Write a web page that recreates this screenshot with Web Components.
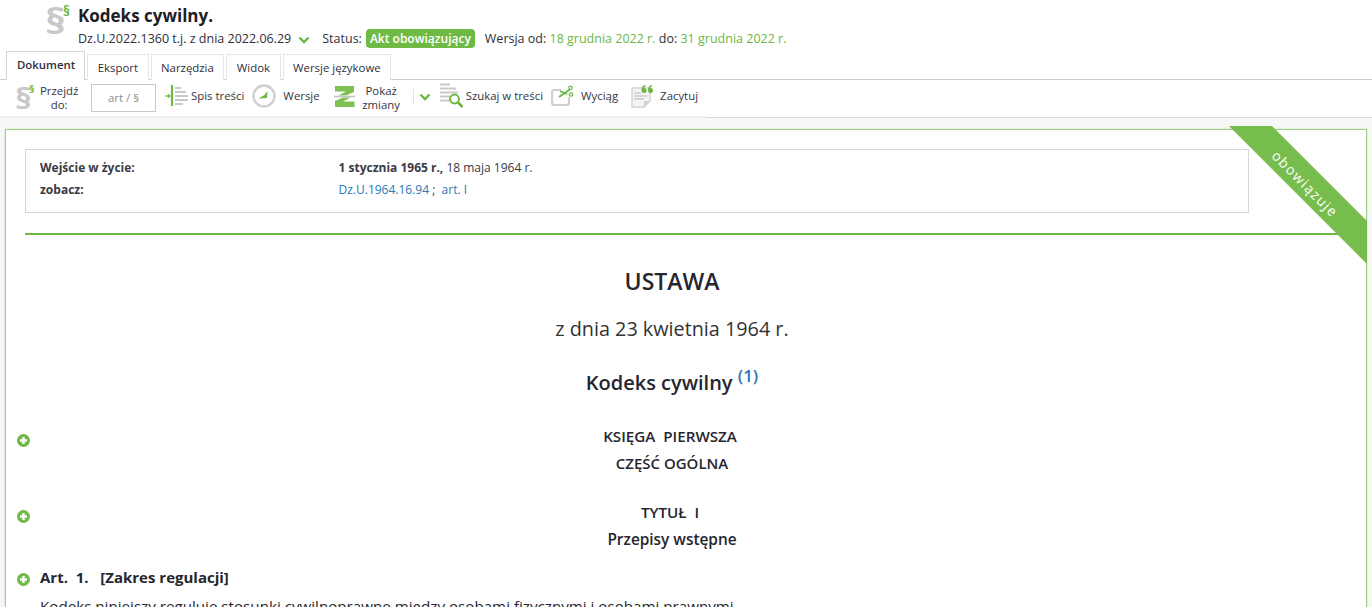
<!DOCTYPE html>
<html lang="pl">
<head>
<meta charset="utf-8">
<title>Kodeks cywilny</title>
<style>
  html, body { margin: 0; height: 607px; overflow: hidden; background: #f7f7f7; }
  body { font-family: "Open Sans", "Liberation Sans", sans-serif; color: #333; }
</style>
</head>
<body>
<kc-header>
  <span slot="title">Kodeks cywilny.</span>
  <kc-tab active>Dokument</kc-tab>
  <kc-tab>Eksport</kc-tab>
  <kc-tab>Narzędzia</kc-tab>
  <kc-tab>Widok</kc-tab>
  <kc-tab>Wersje językowe</kc-tab>
  <kc-toolbar slot="toolbar"></kc-toolbar>
</kc-header>
<kc-card>
  <kc-meta></kc-meta>
  <kc-heading size="23" weight="600" top="29" line="34">USTAWA</kc-heading>
  <kc-heading size="19.8" weight="400" top="17" line="28" color="#333">z dnia 23 kwietnia 1964 r.</kc-heading>
  <kc-heading size="20" weight="600" top="25" line="30">Kodeks cywilny <sup>(1)</sup></kc-heading>
  <kc-heading size="15.2" weight="600" top="25" line="27" plus>KSIĘGA&nbsp; PIERWSZA&nbsp;</kc-heading>
  <kc-heading size="15" weight="600" top="0" line="27">CZĘŚĆ OGÓLNA</kc-heading>
  <kc-heading size="15.2" weight="600" top="22" line="27" plus>TYTUŁ&nbsp; I&nbsp;</kc-heading>
  <kc-heading size="15.4" weight="600" top="0" line="27">Przepisy wstępne</kc-heading>
  <kc-article title-text="Art.&nbsp; 1.&nbsp;&nbsp; [Zakres regulacji]">Kodeks niniejszy reguluje stosunki cywilnoprawne między osobami fizycznymi i osobami prawnymi.</kc-article>
  <kc-ribbon>obowiązuje</kc-ribbon>
</kc-card>

<script>
const CHEVRON = `<svg width="12" height="8" viewBox="0 0 12 8"><path d="M1.5 1.5 6 6l4.5-4.5" fill="none" stroke="#6cb744" stroke-width="2.4"/></svg>`;

class KcHeader extends HTMLElement {
  constructor() {
    super();
    this.attachShadow({mode: 'open'}).innerHTML = `
    <style>
      :host { display: block; background: #fff; height: 118px; box-sizing: border-box; font-size: 12.5px; color: #2f2f3a; }
      .top { display: flex; height: 51px; }
      .logo { width: 78px; position: relative; flex: none; }
      .logo b { position: absolute; left: 45px; top: 0; font-size: 36px; line-height: 42px; color: #c9c9c9; font-weight: 700; transform: scaleX(1.18); transform-origin: left; }
      .logo i { position: absolute; left: 63px; top: 3px; font-size: 14px; line-height: 16px; color: #6cb744; font-style: normal; font-weight: 700; }
      h1 { margin: 0; padding-top: 5px; font-size: 17px; line-height: 21px; font-weight: 700; color: #1d1d26; }
      .sub { display: flex; align-items: center; height: 19px; margin-top: 3px; white-space: nowrap; }
      .sub svg { margin: 2px 0 0 7px; }
      .status { margin-left: 12px; }
      .badge { margin-left: 4px; background: #6fba45; color: #fff; border-radius: 4px; font-size: 12px; font-weight: 600; padding: 0 4px; line-height: 19px; height: 19px; }
      .ver { margin-left: 10px; }
      .g { color: #6cb744; }
      .tabs { display: flex; box-sizing: border-box; height: 29px; padding-left: 6px; gap: 2px; align-items: flex-end; border-bottom: 1px solid #cfcfcf; }
    </style>
    <div class="top">
      <div class="logo"><b>§</b><i>§</i></div>
      <div>
        <h1><slot name="title"></slot></h1>
        <div class="sub">
          <span>Dz.U.2022.1360 t.j. z dnia 2022.06.29</span>${CHEVRON}
          <span class="status">Status:</span><span class="badge">Akt obowiązujący</span>
          <span class="ver">Wersja od: <span class="g">18 grudnia 2022 r.</span> do: <span class="g">31 grudnia 2022 r.</span></span>
        </div>
      </div>
    </div>
    <div class="tabs"><slot></slot></div>
    <slot name="toolbar"></slot>`;
  }
}

class KcTab extends HTMLElement {
  constructor() {
    super();
    this.attachShadow({mode: 'open'}).innerHTML = `
    <style>
      :host { display: block; box-sizing: border-box; height: 26px; margin-bottom: -1px; padding: 0 9.5px; border: 1px solid #e6e6e6; border-bottom: 0; font-size: 11.4px; line-height: 25px; color: #2f2f3a; background: #fff; white-space: nowrap; }
      :host([active]) { height: 29px; border-color: #d4d4d4; font-weight: 600; line-height: 26px; padding: 0 9px 0 10px; position: relative; }
    </style><slot></slot>`;
  }
}

class KcTool extends HTMLElement {
  constructor() {
    super();
    this.attachShadow({mode: 'open'}).innerHTML = `
    <style>
      :host { display: flex; align-items: center; flex: none; font-size: 11.4px; line-height: 14px; color: #35353f; text-align: center; white-space: nowrap; }
      ::slotted(svg) { display: block; flex: none; }
    </style><slot></slot>`;
  }
}
customElements.define('kc-tool', KcTool);

class KcToolbar extends HTMLElement {
  constructor() {
    super();
    this.attachShadow({mode: 'open'}).innerHTML = `
    <style>
      :host { display: flex; align-items: center; box-sizing: border-box; width: 706px; height: 38px; padding: 0 0 4px 16px; background: #fff; border-bottom: 2px solid #ececec; position: relative; }
      :host::after { content: ""; position: absolute; left: 706px; width: 666px; bottom: -2px; height: 1px; background: #d8d8d8; }
      .para { width: 24px; position: relative; height: 30px; flex: none; }
      .para b { position: absolute; left: -1px; top: 1px; font-size: 29px; line-height: 32px; color: #c9c9c9; transform: scaleX(1.18); transform-origin: left; }
      .para i { position: absolute; left: 13px; top: 2px; font-size: 11px; line-height: 12px; color: #6cb744; font-style: normal; font-weight: 700; }
      .input { box-sizing: border-box; width: 65px; height: 28px; margin: 3px 0 0 12px; border: 1px solid #c9c9c9; color: #8d8d8d; font-size: 11.4px; line-height: 26px; text-align: center; flex: none; }
      .sep { width: 1px; height: 16px; margin: 2px 0 0 12px; background: #e2e2e2; flex: none; }
      .chev { margin: 2px 0 0 5px; flex: none; display: block; }
      .two { margin-top: 4px; }
    </style>
    <div class="para"><b>§</b><i>§</i></div>
    <kc-tool class="two" style="width:39px">Przejdź<br>do:</kc-tool>
    <div class="input">art / §</div>
    <kc-tool style="margin-left:9px">
      <svg width="24" height="22" viewBox="0 0 24 22"><path d="M0 11h4" stroke="#6cb744" stroke-width="1.3"/><path d="M3 8.800 6 11l-3 2.200z" fill="#6cb744"/><path d="M7 0v21" stroke="#6cb744" stroke-width="2.200"/><path d="M10 3h6M10 7h11M10 11h13M10 15h13M10 19h8" stroke="#c9c9c9" stroke-width="2.200"/></svg>
      <span style="margin-left:2px">Spis treści</span>
    </kc-tool>
    <kc-tool style="margin-left:8px">
      <svg width="24" height="24" viewBox="0 0 24 24"><circle cx="12" cy="12" r="10.500" fill="#fff" stroke="#cfcfcf" stroke-width="2.400"/><path d="M6.500 14.500 12.500 11 15.500 7 15 14z" fill="#6cb744"/></svg>
      <span style="margin-left:7px">Wersje</span>
    </kc-tool>
    <kc-tool style="margin-left:14px">
      <svg width="21" height="21" viewBox="0 0 21 21"><path d="M1 0h19v6L12 9.500H4.500L12 5.500H1zM1 21v-6l8-3.500h7.500L9 15.500h11.500V21z" fill="#7cc152"/><path d="M0 10.500h21" stroke="#c4c4c4" stroke-width="1.600"/></svg>
      <span class="two" style="margin-left:7px;width:39px">Pokaż<br>zmiany</span>
    </kc-tool>
    <div class="sep"></div>
    ${CHEVRON.replace('<svg', '<svg class="chev"')}
    <kc-tool style="margin-left:9px">
      <svg width="24" height="26" viewBox="0 0 24 26"><path d="M0 1.500h10M0 5.500h16M0 9.500h18M0 13.500h18M0 17.500h10" stroke="#c9c9c9" stroke-width="2.200"/><circle cx="14.500" cy="16" r="4.400" fill="#fff" stroke="#6cb744" stroke-width="2"/><path d="M18 19.500l4.500 4.500" stroke="#6cb744" stroke-width="2.600"/></svg>
      <span style="margin-left:2px">Szukaj w treści</span>
    </kc-tool>
    <kc-tool style="margin-left:8px">
      <svg width="24" height="22" viewBox="0 0 24 22"><path d="M10 5H3Q1 5 1 7v11q0 2 2 2h13q2 0 2-2v-6" fill="none" stroke="#cfcfcf" stroke-width="2.200"/><path d="M8 12 19 4.500M9 6l7 3" stroke="#6cb744" stroke-width="1.800" fill="none"/><circle cx="19.500" cy="2.800" r="1.700" fill="none" stroke="#6cb744" stroke-width="1.200"/><circle cx="20" cy="9.500" r="1.700" fill="none" stroke="#6cb744" stroke-width="1.200"/></svg>
      <span style="margin-left:6px">Wyciąg</span>
    </kc-tool>
    <kc-tool style="margin-left:13px">
      <svg width="23" height="24" viewBox="0 0 23 24"><path d="M1 4H19V17L13 23H1z" fill="#f4f4f4" stroke="#d2d2d2" stroke-width="1.400"/><path d="M3 9h7M3 12h13M3 15h10" stroke="#cbcbcb" stroke-width="1.300"/><path d="M13 23v-6h6z" fill="#d2d2d2"/><circle cx="13" cy="6.500" r="2.500" fill="#6cb744"/><circle cx="19.500" cy="6.500" r="2.500" fill="#6cb744"/><path d="M11.300 6.500Q11.300 2.500 14.500 1.500M17.800 6.500Q17.800 2.500 21 1.500" fill="none" stroke="#6cb744" stroke-width="1.600"/></svg>
      <span style="margin-left:6px">Zacytuj</span>
    </kc-tool>`;
  }
}

class KcCard extends HTMLElement {
  constructor() {
    super();
    this.attachShadow({mode: 'open'}).innerHTML = `
    <style>
      :host { display: block; position: relative; box-sizing: border-box; margin: 11px 5px 0 5px; width: 1362px; height: 500px; background: #fff; border: 1px solid #9ed183; box-shadow: 0 0 2px #c5e3b5; padding: 19px 0 0 19px; }
    </style><slot></slot>`;
  }
}

class KcMeta extends HTMLElement {
  constructor() {
    super();
    this.attachShadow({mode: 'open'}).innerHTML = `
    <style>
      :host { display: block; font-size: 12px; color: #3a3a44; }
      .box { box-sizing: border-box; width: 1224px; height: 64px; border: 1px solid #d6d6d6; padding: 8px 14px; display: grid; grid-template-columns: 298.500px 1fr; grid-auto-rows: 22px; line-height: 20px; }
      b, .label { font-weight: 700; }
      a { color: #2a78b4; text-decoration: none; }
      hr { margin: 20px 0 0; border: 0; height: 2px; background: #6cb744; width: 1341px; }
    </style>
    <div class="box">
      <span class="label">Wejście w życie:</span><span><b>1 stycznia 1965 r.,</b> 18 maja 1964 r.</span>
      <span class="label">zobacz:</span><span><a>Dz.U.1964.16.94</a> ;&nbsp; <a>art. I</a></span>
    </div>
    <hr>`;
  }
}

class KcHeading extends HTMLElement {
  constructor() {
    super();
    const a = n => this.getAttribute(n);
    this.attachShadow({mode: 'open'}).innerHTML = `
    <style>
      :host { display: block; position: relative; width: 1294px; text-align: center; margin-top: ${a('top')}px; font-size: ${a('size')}px; font-weight: ${a('weight')}; line-height: ${a('line')}px; color: ${a('color') || '#26262e'}; white-space: nowrap; }
      ::slotted(sup) { color: #2a78b4; font-size: 17px; line-height: 0; }
      kc-plus { position: absolute; left: -8px; top: 11px; }
    </style>
    ${this.hasAttribute('plus') ? '<kc-plus></kc-plus>' : ''}<slot></slot>`;
  }
}

class KcPlus extends HTMLElement {
  constructor() {
    super();
    this.attachShadow({mode: 'open'}).innerHTML = `
    <style>:host { display: block; width: 13px; height: 13px; } svg { display: block; }</style>
    <svg width="13" height="13" viewBox="0 0 13 13"><circle cx="6.500" cy="6.500" r="6.500" fill="#6fba45"/><path d="M6.500 3v7M3 6.500h7" stroke="#fff" stroke-width="2.400"/></svg>`;
  }
}
customElements.define('kc-plus', KcPlus);

class KcArticle extends HTMLElement {
  constructor() {
    super();
    this.attachShadow({mode: 'open'}).innerHTML = `
    <style>
      :host { display: block; position: relative; margin-top: 11px; padding-left: 15px; font-size: 15.17px; color: #26262e; white-space: nowrap; }
      h2 { margin: 0; font-size: 15px; line-height: 27px; font-weight: 700; }
      p { margin: 4px 0 0; line-height: 22px; }
      kc-plus { position: absolute; left: -8px; top: 9px; }
    </style>
    <kc-plus></kc-plus>
    <h2>${this.getAttribute('title-text')}</h2>
    <p><slot></slot></p>`;
  }
}

class KcRibbon extends HTMLElement {
  constructor() {
    super();
    this.attachShadow({mode: 'open'}).innerHTML = `
    <style>
      :host { display: block; position: absolute; top: -4px; right: -1px; width: 138px; height: 138px; background: #77bd4e; clip-path: polygon(0 0, 43px 0, 100% 95px, 100% 100%); }
      span { position: absolute; left: 6px; top: 49px; width: 140px; text-align: center; transform: rotate(45deg); color: #fff; font-size: 14px; font-weight: 500; line-height: 18px; letter-spacing: 1.300px; }
    </style><span><slot></slot></span>`;
  }
}

customElements.define('kc-header', KcHeader);
customElements.define('kc-tab', KcTab);
customElements.define('kc-toolbar', KcToolbar);
customElements.define('kc-card', KcCard);
customElements.define('kc-meta', KcMeta);
customElements.define('kc-heading', KcHeading);
customElements.define('kc-article', KcArticle);
customElements.define('kc-ribbon', KcRibbon);
</script>
</body>
</html>
